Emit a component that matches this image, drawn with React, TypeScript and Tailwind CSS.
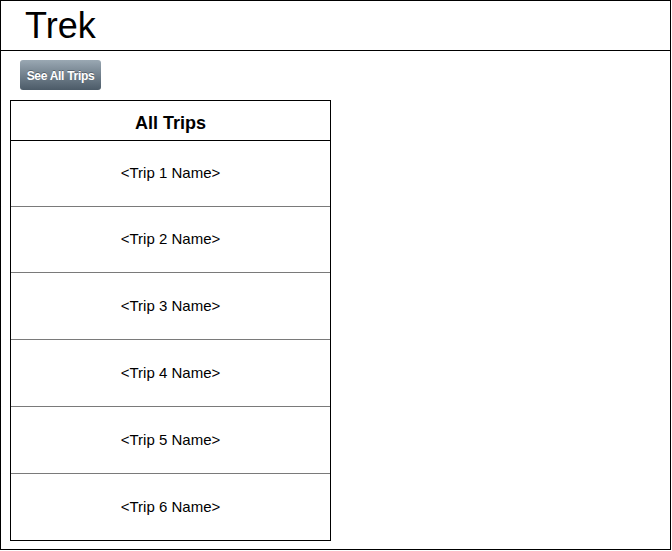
import React from "react";

const trips = [1, 2, 3, 4, 5, 6];
const heights = ["h-[66px]", "h-[66px]", "h-[67px]", "h-[67px]", "h-[67px]", "h-[66px]"];

export default function App() {
  return (
    <div
      className="w-[671px] h-[550px] border border-black bg-white text-black"
      style={{ fontFamily: '"Liberation Sans", Arial, Helvetica, sans-serif' }}
    >
      <div className="h-[50px] border-b border-black pl-[24px] pt-[7px]">
        <h1 className="text-[36px] leading-[36px]">Trek</h1>
      </div>
      <div className="px-[9px] pt-[9px]">
        <button className="ml-[10px] h-[30px] w-[81px] rounded-[3px] bg-gradient-to-b from-[#9aa8b3] to-[#4c5b68] pt-[1px] text-[12px] font-bold text-white tracking-[-0.3px] [text-shadow:0_-1px_0_rgba(0,0,0,0.3)]">
          See All Trips
        </button>
        <div className="mt-[10px] w-[321px] border border-black">
          <div className="h-[40px] border-b border-black flex items-center justify-center pt-[5px] text-[18px] font-bold">
            All Trips
          </div>
          {trips.map((n, i) => (
            <div
              key={n}
              className={`${heights[i]} flex items-center justify-center text-[15px] ${
                i < trips.length - 1 ? "border-b border-[#7a7a7a]" : ""
              }`}
            >
              {`<Trip ${n} Name>`}
            </div>
          ))}
        </div>
      </div>
    </div>
  );
}
